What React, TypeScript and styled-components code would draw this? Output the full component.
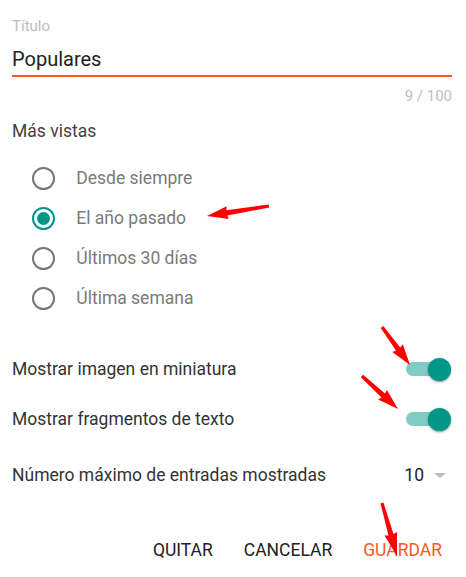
import React from "react";
import styled, { createGlobalStyle } from "styled-components";

const GlobalStyle = createGlobalStyle`
  html, body { margin: 0; padding: 0; background: #ffffff; }
  body { font-family: Roboto, "Noto Sans", Arial, sans-serif; }
  * { box-sizing: border-box; }
`;

const Page = styled.div`
  position: relative;
  width: 466px;
  height: 577px;
  padding: 16px 14px 0 12px;
  background: #ffffff;
  font-family: Roboto, "Noto Sans", Arial, sans-serif;
  overflow: hidden;
`;

const FieldLabel = styled.div`
  font-size: 15px;
  line-height: 20px;
  color: #bdbdbd;
`;

const TitleInput = styled.input`
  display: block;
  width: 100%;
  height: 32px;
  margin: 9px 0 0;
  padding: 0 0 2px;
  border: none;
  border-bottom: 2px solid #ff5722;
  outline: none;
  font-family: inherit;
  font-size: 20px;
  line-height: 30px;
  color: #212121;
  background: transparent;
`;

const Counter = styled.div`
  margin-top: 9px;
  text-align: right;
  font-size: 15px;
  line-height: 20px;
  color: #bdbdbd;
`;

const SectionTitle = styled.div`
  margin-top: 13px;
  font-size: 17.5px;
  line-height: 24px;
  color: #424242;
`;

const RadioGroup = styled.div`
  margin-top: 15px;
  margin-bottom: 4px;
  display: flex;
  flex-direction: column;
`;

const RadioRow = styled.label`
  display: flex;
  align-items: center;
  height: 40px;
  padding-left: 20.3px;
  gap: 21px;
  cursor: pointer;
`;

const RadioCircle = styled.span<{ $checked?: boolean }>`
  position: relative;
  flex: none;
  width: 23px;
  height: 23px;
  border-radius: 50%;
  border: 2.6px solid ${(p) => (p.$checked ? "#009688" : "#757575")};
  display: flex;
  align-items: center;
  justify-content: center;
  &::after {
    content: "";
    width: 13px;
    height: 13px;
    border-radius: 50%;
    background: #009688;
    display: ${(p) => (p.$checked ? "block" : "none")};
  }
`;

const RadioLabel = styled.span`
  font-size: 17.5px;
  line-height: 40px;
  color: #7a7a7a;
`;

const SettingRow = styled.div<{ $gapTop?: number }>`
  display: flex;
  align-items: center;
  justify-content: space-between;
  height: 50px;
  margin-top: ${(p) => p.$gapTop ?? 0}px;
`;

const SettingLabel = styled.span`
  font-size: 17.5px;
  line-height: 50px;
  color: #333333;
`;

const Switch = styled.span`
  position: relative;
  display: flex;
  align-items: center;
  width: 45px;
  height: 23px;
  margin-right: 1px;
`;

const Track = styled.span`
  width: 40px;
  height: 14px;
  border-radius: 7px;
  background: #80cbc4;
`;

const Thumb = styled.span`
  position: absolute;
  right: 0;
  top: 0;
  width: 23px;
  height: 23px;
  border-radius: 50%;
  background: #009688;
  box-shadow: 0 1px 3px rgba(0, 0, 0, 0.3), 0 1px 1px rgba(0, 0, 0, 0.14);
`;

const Select = styled.span`
  display: flex;
  align-items: center;
  gap: 10px;
  margin-right: 6px;
`;

const SelectValue = styled.span`
  font-size: 17.5px;
  line-height: 50px;
  color: #212121;
`;

const Caret = styled.span`
  width: 0;
  height: 0;
  border-left: 6px solid transparent;
  border-right: 6px solid transparent;
  border-top: 5px solid #bdbdbd;
`;

const Actions = styled.div`
  display: flex;
  justify-content: flex-end;
  gap: 11px;
  margin-top: 28px;
`;

const ActionButton = styled.button<{ $primary?: boolean }>`
  height: 45px;
  padding: 0 10px;
  border: none;
  background: transparent;
  font-family: inherit;
  font-size: 17.5px;
  line-height: 45px;
  font-weight: 400;
  text-transform: uppercase;
  color: ${(p) => (p.$primary ? "#ff5722" : "#212121")};
  cursor: pointer;
`;

const Overlay = styled.svg`
  position: absolute;
  left: 0;
  top: 0;
  width: 466px;
  height: 577px;
  pointer-events: none;
`;

type ArrowProps = { x1: number; y1: number; x2: number; y2: number; head?: number };

function Arrow({ x1, y1, x2, y2, head = 20 }: ArrowProps) {
  const dx = x2 - x1;
  const dy = y2 - y1;
  const len = Math.hypot(dx, dy);
  const ux = dx / len;
  const uy = dy / len;
  const nx = -uy;
  const ny = ux;
  const bx = x2 - ux * head;
  const by = y2 - uy * head;
  const pts: [number, number][] = [
    [x1 + nx * 1.6, y1 + ny * 1.6],
    [bx + nx * 2.6, by + ny * 2.6],
    [bx - ux * 1 + nx * 6.5, by - uy * 1 + ny * 6.5],
    [x2, y2],
    [bx - ux * 1 - nx * 6.5, by - uy * 1 - ny * 6.5],
    [bx - nx * 2.6, by - ny * 2.6],
    [x1 - nx * 1.6, y1 - ny * 1.6],
  ];
  return (
    <polygon
      points={pts.map((p) => `${p[0].toFixed(1)},${p[1].toFixed(1)}`).join(" ")}
      fill="#ff0000"
      strokeLinejoin="round"
    />
  );
}

const periods = [
  { label: "Desde siempre", checked: false },
  { label: "El año pasado", checked: true },
  { label: "Últimos 30 días", checked: false },
  { label: "Última semana", checked: false },
];

export default function App() {
  return (
    <>
      <GlobalStyle />
      <Page>
        <FieldLabel>Título</FieldLabel>
        <TitleInput defaultValue="Populares" />
        <Counter>9 / 100</Counter>
        <SectionTitle>Más vistas</SectionTitle>
        <RadioGroup>
          {periods.map((p) => (
            <RadioRow key={p.label}>
              <RadioCircle $checked={p.checked} />
              <RadioLabel>{p.label}</RadioLabel>
            </RadioRow>
          ))}
        </RadioGroup>
        <SettingRow $gapTop={26}>
          <SettingLabel>Mostrar imagen en miniatura</SettingLabel>
          <Switch>
            <Track />
            <Thumb />
          </Switch>
        </SettingRow>
        <SettingRow>
          <SettingLabel>Mostrar fragmentos de texto</SettingLabel>
          <Switch>
            <Track />
            <Thumb />
          </Switch>
        </SettingRow>
        <SettingRow $gapTop={6}>
          <SettingLabel>Número máximo de entradas mostradas</SettingLabel>
          <Select>
            <SelectValue>10</SelectValue>
            <Caret />
          </Select>
        </SettingRow>
        <Actions>
          <ActionButton>Quitar</ActionButton>
          <ActionButton>Cancelar</ActionButton>
          <ActionButton $primary>Guardar</ActionButton>
        </Actions>
        <Overlay viewBox="0 0 466 577">
          <Arrow x1={269} y1={206} x2={207} y2={216} />
          <Arrow x1={382} y1={327} x2={410} y2={365} />
          <Arrow x1={362} y1={376} x2={398} y2={409} />
          <Arrow x1={382} y1={503} x2={397} y2={556} head={22} />
        </Overlay>
      </Page>
    </>
  );
}
